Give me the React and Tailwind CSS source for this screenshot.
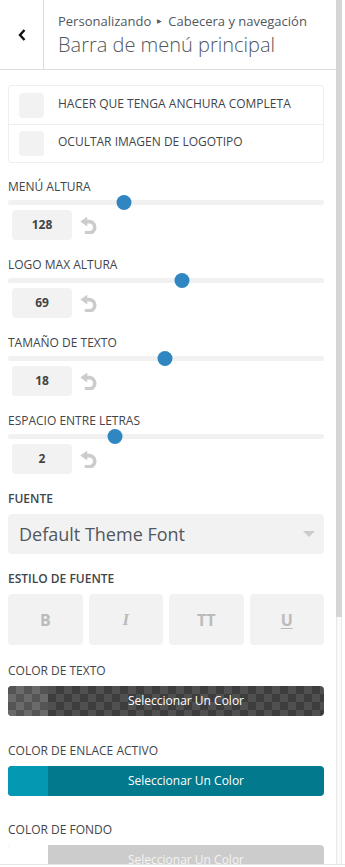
import { useState } from "react";

const font = { fontFamily: '"Open Sans", "Liberation Sans", sans-serif' };

function ResetIcon() {
  return (
    <svg width="17" height="17" viewBox="0 -1 16 16" className="text-[#cccccc]">
      <path d="M6 3.3H8.6a5.3 5.3 0 0 1 0 10.6H4.5" fill="none" stroke="currentColor" strokeWidth="3.4" />
      <path d="M0.3 3.3 6.8 -1.3v9.2z" fill="currentColor" />
    </svg>
  );
}

function Slider({ label, value, pos }) {
  return (
    <div className="mb-[17px]">
      <div className="h-4 text-[12px] leading-4 text-[#3f454b]">{label}</div>
      <div className="relative h-[15px]">
        <div className="absolute left-0 right-0 top-[5px] h-[5px] rounded-full bg-[#f1f1f1]" />
        <div
          className="absolute top-0 h-[15px] w-[15px] -translate-x-1/2 rounded-full bg-[#2f86c0]"
          style={{ left: pos }}
        />
      </div>
      <div className="flex items-center gap-2 pl-1">
        <div className="flex h-[30px] w-[60px] items-center justify-center rounded bg-[#f2f2f2] text-[12px] font-bold text-[#444]">
          {value}
        </div>
        <ResetIcon />
      </div>
    </div>
  );
}

function Label({ children, className = "" }) {
  return <div className={"h-4 text-[12px] leading-4 text-[#3f454b] " + className}>{children}</div>;
}

function ColorBar({ swatch, fill, text = "text-white" }) {
  return (
    <div className={"mt-[7px] flex h-[30px] overflow-hidden rounded " + fill}>
      <div className={"w-[40px] shrink-0 " + swatch} />
      <div className={"flex flex-1 items-center justify-center text-[12px] " + text}>Seleccionar Un Color</div>
    </div>
  );
}

export default function App() {
  const [checks] = useState(["HACER QUE TENGA ANCHURA COMPLETA", "OCULTAR IMAGEN DE LOGOTIPO"]);
  return (
    <div className="flex h-[867px] w-[345px] flex-col overflow-hidden bg-white" style={font}>
      <div className="flex h-[864px] overflow-hidden">
        <div className="w-[336px] shrink-0">
          {/* header */}
          <div className="flex h-[70px] border-b border-[#dddddd]">
            <div className="flex w-[44px] items-center justify-center border-r border-[#dddddd]">
              <svg width="10" height="14" viewBox="0 0 10 14">
                <path d="M7.5 2 3 7l4.5 5" fill="none" stroke="#111" strokeWidth="2.4" />
              </svg>
            </div>
            <div className="flex flex-col justify-center pl-[14px] text-[#50575e]">
              <div className="flex items-center text-[13px] leading-5">
                Personalizando
                <span className="mx-[6px] text-[6px]">▶</span>
                Cabecera y navegación
              </div>
              <div className="text-[20px] font-light leading-7 text-[#50575e]">Barra de menú principal</div>
            </div>
          </div>

          <div className="pl-2 pr-3">
            {/* checkboxes */}
            <div className="mt-[15px] rounded-[3px] border border-[#eeeeee]">
              {checks.map((c, i) => (
                <div
                  key={c}
                  className={"flex h-[38px] items-center gap-[14px] pl-[10px] " + (i ? "border-t border-[#eeeeee]" : "")}
                >
                  <div className="h-[25px] w-[25px] rounded bg-[#f2f2f2]" />
                  <span className="-mt-[3px] text-[12px] text-[#3f454b]">{c}</span>
                </div>
              ))}
            </div>

            <div className="mt-[16px]">
              <Slider label="MENÚ ALTURA" value="128" pos="116px" />
              <Slider label="LOGO MAX ALTURA" value="69" pos="174px" />
              <Slider label="TAMAÑO DE TEXTO" value="18" pos="157px" />
              <Slider label="ESPACIO ENTRE LETRAS" value="2" pos="107px" />
            </div>

            <Label className="font-semibold">FUENTE</Label>
            <div className="mt-[7px] flex h-[40px] items-center justify-between rounded bg-[#f2f2f2] pl-[11px] pr-[9px]">
              <span className="text-[18px] text-[#50575e]">Default Theme Font</span>
              <span className="h-0 w-0 border-x-[6px] border-t-[6px] border-x-transparent border-t-[#cccccc]" />
            </div>

            <Label className="mt-[17px] font-semibold">ESTILO DE FUENTE</Label>
            <div className="mt-[7px] grid h-[51px] grid-cols-4 gap-[6px]">
              <div className="flex items-center justify-center rounded bg-[#f2f2f2] text-[16px] font-bold text-[#bbbbbb]">B</div>
              <div
                className="flex items-center justify-center rounded bg-[#f2f2f2] text-[17px] font-bold italic text-[#bbbbbb]"
                style={{ fontFamily: '"Liberation Serif", serif' }}
              >
                I
              </div>
              <div className="flex items-center justify-center rounded bg-[#f2f2f2] text-[16px] font-bold text-[#bbbbbb]">TT</div>
              <div className="flex items-center justify-center rounded bg-[#f2f2f2] text-[16px] font-bold text-[#bbbbbb] underline underline-offset-2">U</div>
            </div>

            <Label className="mt-[18px]">COLOR DE TEXTO</Label>
            <ColorBar
              fill="bg-[repeating-conic-gradient(#505050_0_25%,#3d3d3d_0_50%)] bg-[length:16px_16px]"
              swatch="bg-[repeating-conic-gradient(#6a6a6a_0_25%,#555555_0_50%)] bg-[length:16px_16px]"
            />

            <Label className="mt-[27px]">COLOR DE ENLACE ACTIVO</Label>
            <ColorBar fill="bg-[#03798d]" swatch="bg-[#0399b3]" />

            <Label className="mt-[26px]">COLOR DE FONDO</Label>
            <ColorBar fill="bg-[#cccccc]" swatch="bg-white" text="text-[#f4f4f4]" />
          </div>
        </div>

        {/* scrollbar */}
        <div className="flex w-[6px] shrink-0 flex-col">
          <div className="h-[617px] bg-[#d6d6d6]" />
          <div className="flex-1 border-x border-[#e8e8e8] bg-[#fafafa]" />
        </div>
      </div>
      <div className="flex-1 border-t border-[#e5e5e5] bg-white" />
    </div>
  );
}
